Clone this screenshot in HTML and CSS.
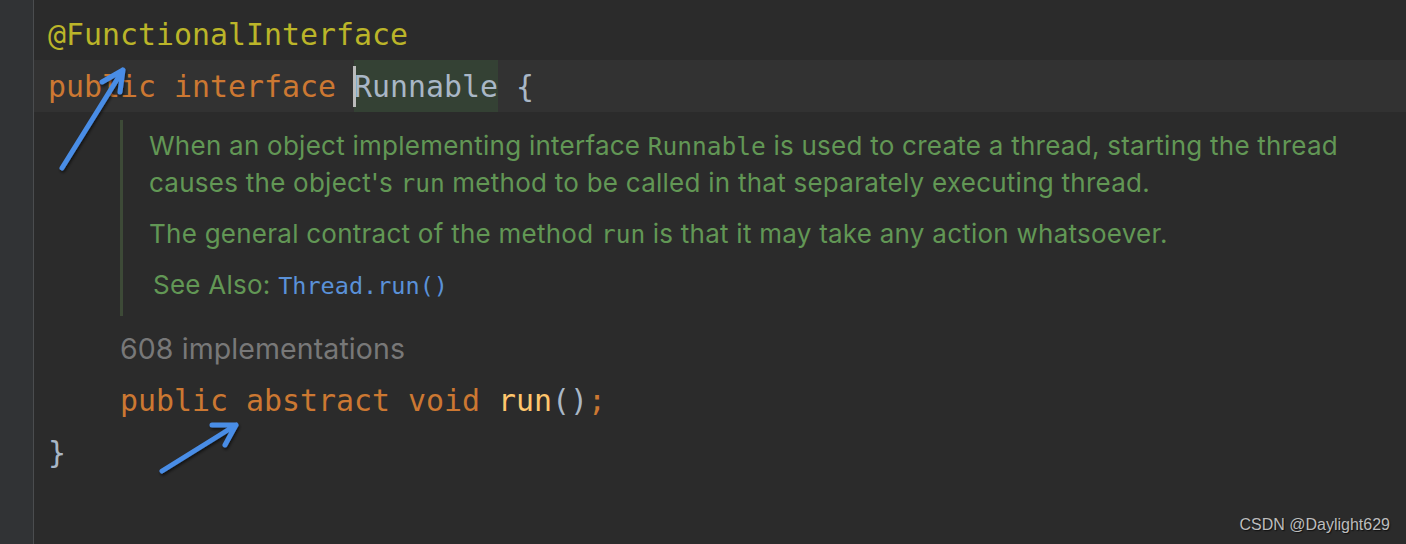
FILE: index.html
```html
<!DOCTYPE html>
<html lang="en">
<head>
<meta charset="UTF-8">
<title>Runnable.java</title>
<link rel="stylesheet" href="styles.css">
</head>
<body>

<div class="ide">
  <!-- line number gutter -->
  <div class="gutter"></div>

  <!-- code area -->
  <div class="editor">
    <div class="line"><span class="annotation">@FunctionalInterface</span></div>
    <div class="line current"><span class="kw">public interface</span> <span class="caret-word"><span class="caret"></span>Runnable</span> <span class="plain">{</span></div>

    <div class="doc">
      <p>When an object implementing interface <code>Runnable</code> is used to create a thread, starting the thread causes the object's <code>run</code> method to be called in that separately executing thread.</p>
      <p>The general contract of the method <code>run</code> is that it may take any action whatsoever.</p>
      <p class="see-also">See Also: <code class="link">Thread.run()</code></p>
    </div>

    <div class="hint">608 implementations</div>
    <div class="line indent"><span class="kw">public abstract void</span> <span class="method">run</span><span class="plain">()</span><span class="kw">;</span></div>
    <div class="line"><span class="plain">}</span></div>
  </div>

  <!-- screenshot annotations -->
  <svg class="arrows" width="1406" height="544" viewBox="0 0 1406 544">
    <defs>
      <filter id="shadow" x="-20%" y="-20%" width="140%" height="140%">
        <feDropShadow dx="1" dy="2" stdDeviation="1.5" flood-color="#000" flood-opacity="0.6"/>
      </filter>
    </defs>
    <g fill="none" stroke="#4a8de6" stroke-width="5" stroke-linecap="round" stroke-linejoin="round" filter="url(#shadow)">
      <path d="M62 168 L123 70 M102 82 L123 70 L120 92"/>
      <path d="M162 471 L236 425 M212 425 L236 425 L225 445"/>
    </g>
  </svg>

  <div class="watermark">CSDN @Daylight629</div>
</div>

</body>
</html>
```

FILE: styles.css
```css
body {
  margin: 0;
  padding: 0;
  background-color: #2b2b2b;
  overflow: hidden;
}

.ide {
  position: relative;
  display: flex;
  width: 1406px;
  height: 544px;
  background-color: #2b2b2b;
}

.gutter {
  width: 33px;
  flex-shrink: 0;
  background-color: #313335;
  border-right: 1px solid #4b4d4f;
}

.editor {
  flex: 1;
  padding-top: 8px;
  font-family: "DejaVu Sans Mono", "Liberation Mono", monospace;
  font-size: 29.9px;
}

.line {
  height: 52px;
  line-height: 54px;
  padding-left: 14px;
  white-space: pre;
}

.line.current {
  background-color: #323232;
}

.line.indent {
  padding-left: 86px;
}

.annotation { color: #bbb529; }
.kw { color: #cc7832; }
.plain { color: #a9b7c6; }
.method { color: #ffc66d; }

.caret-word {
  position: relative;
  display: inline-block;
  height: 52px;
  color: #a9b7c6;
  background-color: #344134;
  vertical-align: top;
}

.caret {
  position: absolute;
  left: -1px;
  top: 6px;
  width: 3px;
  height: 41px;
  background-color: #bbbbbb;
}

/* rendered javadoc */
.doc {
  width: 1215px;
  margin: 8px 0 0 86px;
  padding: 8px 0 4px 26px;
  border-left: 3px solid #3d4a37;
  font-family: Inter, "Noto Sans", sans-serif;
  font-size: 26px;
  letter-spacing: 0.25px;
  color: #629755;
}

.doc p {
  margin: 0 0 14px 0;
  line-height: 36px;
}

.doc code {
  font-family: "DejaVu Sans Mono", "Liberation Mono", monospace;
  font-size: 24.5px;
  letter-spacing: 0;
}

.doc .see-also {
  margin-left: 4px;
  margin-bottom: 0;
  padding-bottom: 8px;
}

.doc code.link {
  color: #5a91d8;
  font-size: 23.5px;
}

.hint {
  margin: 12px 0 0 86px;
  height: 46px;
  line-height: 42px;
  font-family: Inter, "Noto Sans", sans-serif;
  font-size: 28.5px;
  letter-spacing: 0.1px;
  color: #787878;
}

.arrows {
  position: absolute;
  left: 0;
  top: 0;
  pointer-events: none;
}

.watermark {
  position: absolute;
  right: 16px;
  bottom: 10px;
  font-family: "Liberation Sans", Arial, sans-serif;
  font-size: 16px;
  color: #bdbdbd;
  text-shadow: 1px 1px 1px #111;
}
```
